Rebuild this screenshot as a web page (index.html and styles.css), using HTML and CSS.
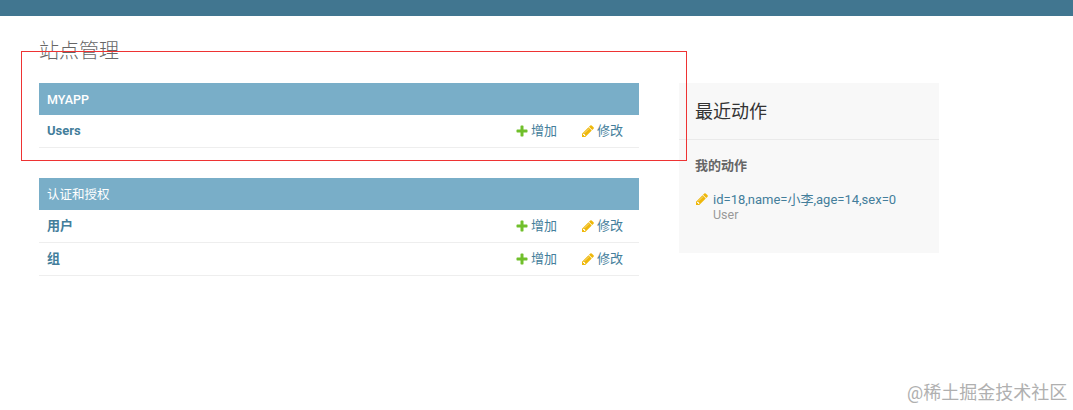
FILE: index.html
```html
<!DOCTYPE html>
<html lang="zh-CN">
<head>
  <meta charset="UTF-8" />
  <title>站点管理</title>
  <link rel="stylesheet" href="styles.css">
</head>
<body>
  <svg class="icon-defs" width="0" height="0">
    <symbol id="icon-add" viewBox="0 0 1792 1792">
      <path d="M1600 796v192q0 40-28 68t-68 28h-416v416q0 40-28 68t-68 28h-192q-40 0-68-28t-28-68v-416h-416q-40 0-68-28t-28-68v-192q0-40 28-68t68-28h416v-416q0-40 28-68t68-28h192q40 0 68 28t28 68v416h416q40 0 68 28t28 68z" />
    </symbol>
    <symbol id="icon-change" viewBox="0 0 1792 1792">
      <path d="M491 1536l91-91-235-235-91 91v107h128v128h107zm523-928q0-22-22-22-10 0-17 7l-542 542q-7 7-7 17 0 22 22 22 10 0 17-7l542-542q7-7 7-17zm-54-192l416 416-832 832h-416v-416zm683 96q0 53-37 90l-166 166-416-416 166-165q36-38 90-38 53 0 91 38l235 234q37 39 37 91z" />
    </symbol>
  </svg>

  <div id="header"></div>

  <div id="content">
    <h1>站点管理</h1>
    <div class="columns">

      <!-- App list -->
      <div class="app-list">
        <div class="module">
          <h2 class="module-title">MYAPP</h2>
          <div class="model-row">
            <a class="model-name">Users</a>
            <div class="model-links">
              <a class="link"><svg class="icon add"><use href="#icon-add" /></svg>增加</a>
              <a class="link"><svg class="icon change"><use href="#icon-change" /></svg>修改</a>
            </div>
          </div>
        </div>

        <div class="module">
          <h2 class="module-title cjk">认证和授权</h2>
          <div class="model-row">
            <a class="model-name">用户</a>
            <div class="model-links">
              <a class="link"><svg class="icon add"><use href="#icon-add" /></svg>增加</a>
              <a class="link"><svg class="icon change"><use href="#icon-change" /></svg>修改</a>
            </div>
          </div>
          <div class="model-row">
            <a class="model-name">组</a>
            <div class="model-links">
              <a class="link"><svg class="icon add"><use href="#icon-add" /></svg>增加</a>
              <a class="link"><svg class="icon change"><use href="#icon-change" /></svg>修改</a>
            </div>
          </div>
        </div>
      </div>

      <!-- Recent actions -->
      <div class="sidebar">
        <h2 class="sidebar-title">最近动作</h2>
        <div class="sidebar-body">
          <h3>我的动作</h3>
          <div class="action">
            <svg class="icon change"><use href="#icon-change" /></svg>
            <div>
              <a class="link">id=18,name=小李,age=14,sex=0</a>
              <div class="action-type">User</div>
            </div>
          </div>
        </div>
      </div>

    </div>
  </div>

  <!-- Annotation and watermark on top of the shot -->
  <div class="red-box"></div>
  <div class="watermark">@稀土掘金技术社区</div>
</body>
</html>
```

FILE: styles.css
```css
* { margin:0; padding:0; box-sizing:border-box; }
html, body {
  height:100%; overflow:hidden; background:#fff; color:#333;
  font-family:Roboto, "Noto Sans CJK SC", "Liberation Sans", sans-serif;
  font-size:13px;
}
.icon-defs { position:absolute; }

#header { height:16px; background:#417690; }

#content { padding:24px 39px 0; }
h1 {
  font-size:20px; font-weight:300; line-height:22px; color:#666;
  margin-bottom:21px;
}
.columns { display:flex; gap:40px; align-items:flex-start; }

/* APP LIST */
.app-list { width:600px; }
.module { margin-bottom:30px; }
.module-title {
  height:32px; padding:0 8px; background:#79aec8; color:#fff;
  font-size:12.5px; font-weight:500; line-height:33px;
}
.module-title.cjk { font-weight:400; }
.model-row {
  display:flex; justify-content:space-between; align-items:center;
  height:33px; padding:0 16px 0 8px; border-bottom:1px solid #eee;
  line-height:16px;
}
.model-name { color:#447e9b; font-weight:700; }
.model-links { display:flex; gap:24px; }
.link { color:#447e9b; display:inline-flex; align-items:center; }

.icon { width:14px; height:14px; flex:none; }
.add { fill:#70bf2b; margin-right:2px; }
.change { fill:#efb80b; margin-right:2px; }

/* SIDEBAR */
.sidebar { width:260px; height:170px; background:#f8f8f8; }
.sidebar-title {
  font-size:18px; font-weight:400; line-height:24px; color:#333;
  padding:17px 16px 15px; border-bottom:1px solid #eaeaea;
}
.sidebar-body { padding:18px 16px 0; }
.sidebar-body h3 {
  font-size:13px; font-weight:700; line-height:16px; color:#666;
  margin-bottom:18px;
}
.action { display:flex; gap:2px; line-height:16px; }
.action .icon { margin-right:2px; }
.action-type { color:#999; font-size:12.5px; line-height:15px; margin-top:-1px; }

/* OVERLAYS */
.red-box {
  position:absolute; left:21px; top:51px; width:666px; height:110px;
  border:1px solid #ee3333;
}
.watermark {
  position:absolute; left:907px; top:380px;
  font-size:18px; line-height:26px; color:#b0b0b0; white-space:nowrap;
}
```
